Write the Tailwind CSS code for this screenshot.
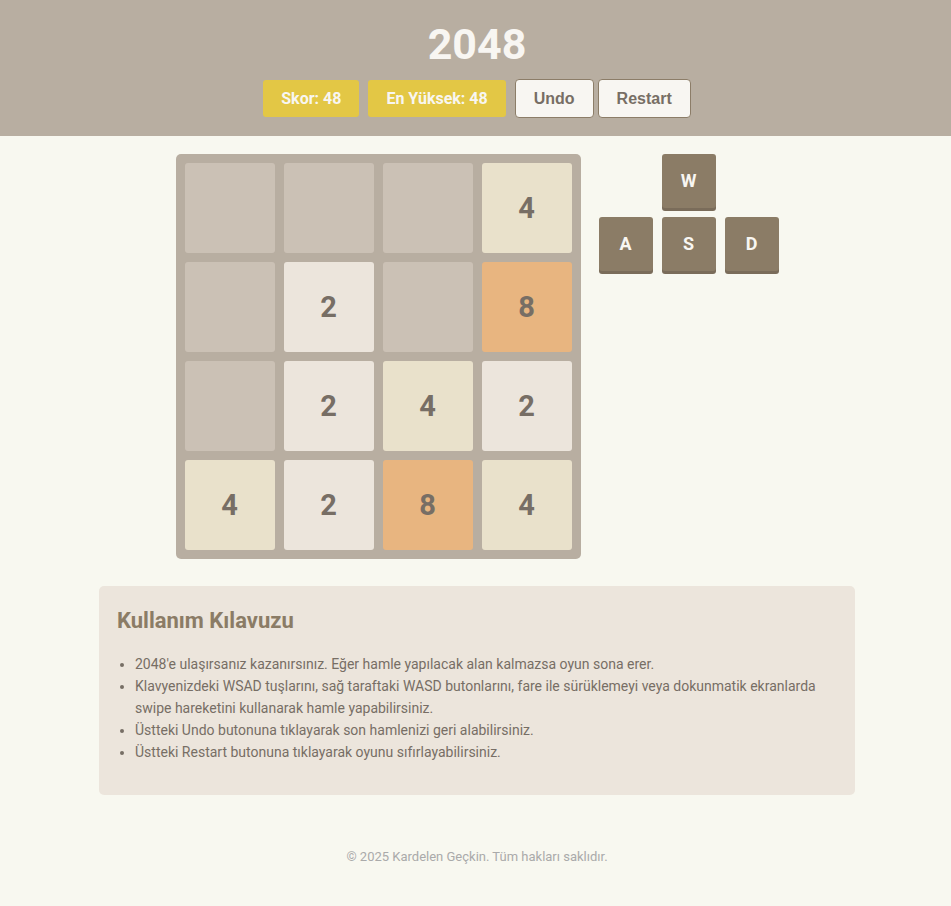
<!DOCTYPE html>
<html lang="tr">
<head>
<meta charset="utf-8">
<meta name="viewport" content="width=device-width, initial-scale=1">
<title>2048</title>
<script src="https://cdn.jsdelivr.net/npm/@tailwindcss/browser@4"></script>
</head>
<body class="min-h-screen bg-[#f8f8f0] font-[Roboto,sans-serif] text-[#776e65]">
<header class="flex flex-col items-center bg-[#b8aea1] py-[18px] pr-4 pl-[19px]">
  <h1 class="text-[43px] leading-[52px] font-bold text-[#f8f6f2]">2048</h1>
  <div class="mt-[9px] flex flex-wrap items-center justify-center gap-[9px] text-base font-bold">
    <div class="rounded-[3px] bg-[#e3c745] px-[18px] py-[9px] leading-[19px] text-[#f8f6f2]">Skor: 48</div>
    <div class="rounded-[3px] bg-[#e3c745] px-[18px] py-[9px] leading-[19px] text-[#f8f6f2]">En Yüksek: 48</div>
    <div class="flex gap-1 font-['Liberation_Sans',Arial,sans-serif]">
      <button type="button" class="rounded-[4px] border border-[#8c7d68] bg-[#f8f6f2] px-[18px] py-[9px] leading-[19px]">Undo</button>
      <button type="button" class="rounded-[4px] border border-[#8c7d68] bg-[#f8f6f2] px-[18px] py-[9px] leading-[19px]">Restart</button>
    </div>
  </div>
</header>
<main class="pl-[3px]">
  <section class="flex flex-wrap items-start justify-center gap-[18px] pt-[18px]" aria-label="Oyun">
    <div class="grid grid-cols-4 gap-[9px] rounded-[5px] bg-[#b8aea1] p-[9px] text-[29px] leading-[34px] font-bold">
      <div class="size-[90px] rounded-[3px] bg-[#cbc1b5]"></div>
      <div class="size-[90px] rounded-[3px] bg-[#cbc1b5]"></div>
      <div class="size-[90px] rounded-[3px] bg-[#cbc1b5]"></div>
      <div class="flex size-[90px] items-center justify-center rounded-[3px] bg-[#e9e1cb]">4</div>
      <div class="size-[90px] rounded-[3px] bg-[#cbc1b5]"></div>
      <div class="flex size-[90px] items-center justify-center rounded-[3px] bg-[#ece5dc]">2</div>
      <div class="size-[90px] rounded-[3px] bg-[#cbc1b5]"></div>
      <div class="flex size-[90px] items-center justify-center rounded-[3px] bg-[#e8b580]">8</div>
      <div class="size-[90px] rounded-[3px] bg-[#cbc1b5]"></div>
      <div class="flex size-[90px] items-center justify-center rounded-[3px] bg-[#ece5dc]">2</div>
      <div class="flex size-[90px] items-center justify-center rounded-[3px] bg-[#e9e1cb]">4</div>
      <div class="flex size-[90px] items-center justify-center rounded-[3px] bg-[#ece5dc]">2</div>
      <div class="flex size-[90px] items-center justify-center rounded-[3px] bg-[#e9e1cb]">4</div>
      <div class="flex size-[90px] items-center justify-center rounded-[3px] bg-[#ece5dc]">2</div>
      <div class="flex size-[90px] items-center justify-center rounded-[3px] bg-[#e8b580]">8</div>
      <div class="flex size-[90px] items-center justify-center rounded-[3px] bg-[#e9e1cb]">4</div>
    </div>
    <div class="grid grid-cols-3 gap-[9px] text-lg font-bold text-[#f8f6f2]">
      <button type="button" class="col-start-2 size-[54px] rounded-[3px] bg-[#8b7c66] shadow-[0_3px_0_#7a6c5a]">W</button>
      <button type="button" class="col-start-1 size-[54px] rounded-[3px] bg-[#8b7c66] shadow-[0_3px_0_#7a6c5a]">A</button>
      <button type="button" class="size-[54px] rounded-[3px] bg-[#8b7c66] shadow-[0_3px_0_#7a6c5a]">S</button>
      <button type="button" class="size-[54px] rounded-[3px] bg-[#8b7c66] shadow-[0_3px_0_#7a6c5a]">D</button>
    </div>
  </section>
  <section class="mx-auto mt-[27px] w-[calc(100%-36px)] max-w-[756px] rounded-[5px] bg-[#ece5dc] px-[18px] pt-[18px] pb-8">
    <h2 class="text-[22px] leading-[34px] font-bold text-[#8b7c66]">Kullanım Kılavuzu</h2>
    <ul class="mt-[15px] list-disc pl-[18px] text-sm leading-[22px]">
      <li>2048'e ulaşırsanız kazanırsınız. Eğer hamle yapılacak alan kalmazsa oyun sona erer.</li>
      <li>Klavyenizdeki WSAD tuşlarını, sağ taraftaki WASD butonlarını, fare ile sürüklemeyi veya dokunmatik ekranlarda swipe hareketini kullanarak hamle yapabilirsiniz.</li>
      <li>Üstteki Undo butonuna tıklayarak son hamlenizi geri alabilirsiniz.</li>
      <li>Üstteki Restart butonuna tıklayarak oyunu sıfırlayabilirsiniz.</li>
    </ul>
  </section>
</main>
<footer class="mt-[54px] pb-[41px] pl-[3px] text-center text-[13px] leading-[16px] text-[#aaa]">© 2025 Kardelen Geçkin. Tüm hakları saklıdır.</footer>
</body>
</html>
